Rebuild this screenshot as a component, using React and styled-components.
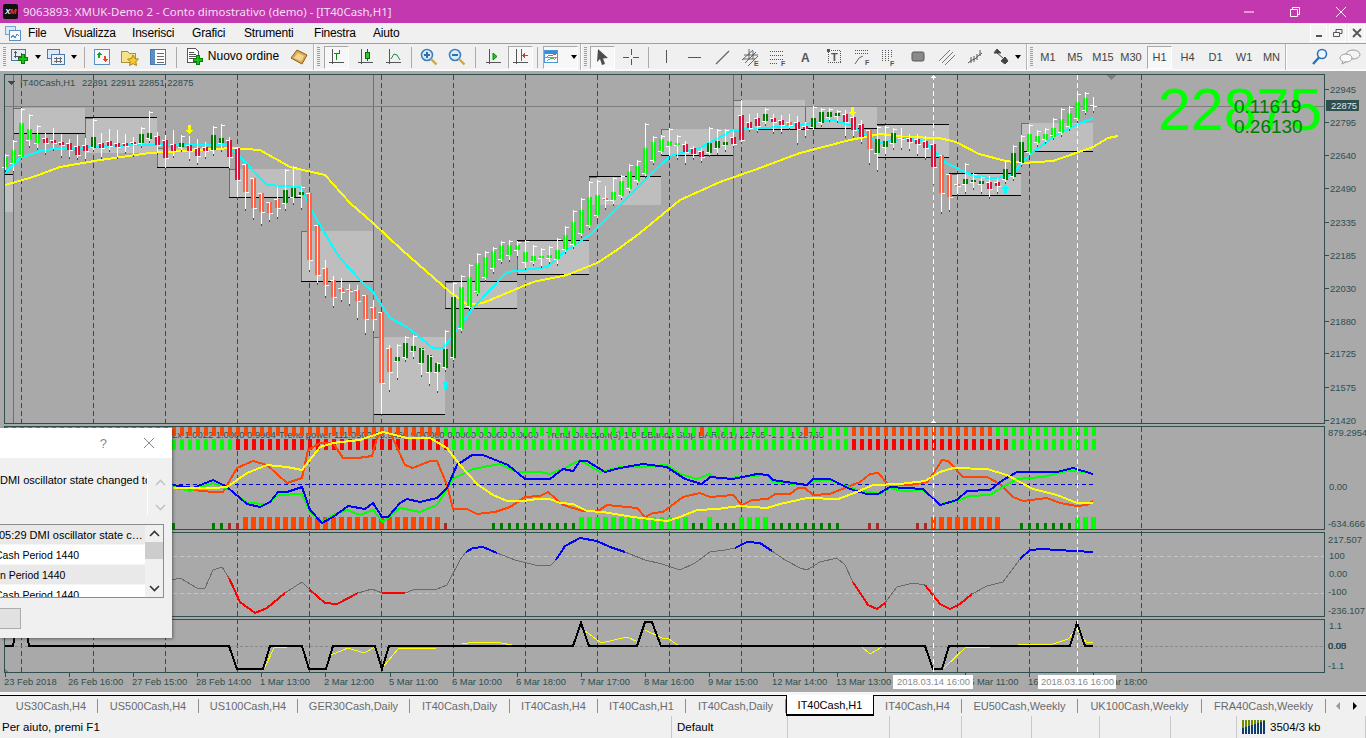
import React from "react";
import styled, { createGlobalStyle } from "styled-components";

const GlobalStyle = createGlobalStyle`
  html, body { margin: 0; padding: 0; background: #f0f0f0; overflow: hidden; }
  * { box-sizing: border-box; }
`;

const UI_FONT = `"Liberation Sans", Arial, sans-serif`;
const SLATE = "#2f4f4f";

/* ---------- chart data, in screen pixels ---------- */

const barX = (k) => 5.33 + 8 * k;

// type, body top, body bottom, optional wick high / low
const CANDLES = [
  ["G",157,167],["G",150,163],["G",123,157,108,158],["G",129,140,114,146],["G",134,143],["r",138,143],["r",140,143],["r",142,145],
  ["r",143,150],["r",146,155],["r",145,151],["D",137,148,119,150],["r",143,148],["r",141,146,129,150],["r",143,147],["r",143,146],
  ["r",142,144],["D",134,143,127,146],["D",133,139,111,141],["r",136,145],["r",140,158,135,168],["r",144,151,130,156],["D",143,147,135,150],["r",145,151,136,159],
  ["r",148,156,139,163],["r",147,151,142,157],["D",135,150,126,154],["D",138,143,124,150],["r",140,157,137,168],["r",148,180,148,197],["R",164,192,164,209],["R",178,208,178,218],
  ["R",193,212,193,224],["R",202,213,202,220],["R",199,208,186,217],["D",190,203,169,209],["D",188,197,166,203],["D",192,195,186,208],["R",193,260,193,270],["R",225,275,225,283],
  ["R",268,285,260,296],["R",280,297,276,306],["R",288,292,278,300],["R",289,291,284,304],["R",290,301,285,318],["R",295,319,295,333],["R",307,319,300,331],["R",312,383,312,414],
  ["R",348,372,345,390],["D",357,361,344,378],["D",343,358,336,360],["D",346,351,335,357],["D",348,363,348,375],["D",355,372,355,384],["D",363,372,362,391],["D",349,368,330,370],
  ["D",297,358,282,360],["G",287,329,275,331],["G",277,307,264,309],["G",263,293,253,294],["G",257,278,251,280],["G",251,268,247,272],["G",245,260,241,262],["G",245,255,240,260],
  ["G",245,250,241,256],["G",252,262,240,268],["G",256,261,245,264],["G",256,258,248,266],["G",255,258,246,262],["G",250,259,238,264],["G",235,250,226,252],["G",222,245,210,247],
  ["G",210,233,198,236],["G",197,225,181,228],["G",195,215,180,218],["o",198,200,186,208],["G",192,200,177,204],["G",181,196,175,198],["G",171,189,164,191],["G",166,181,160,183],
  ["G",148,174,123,176],["G",142,161,136,163],["G",139,152,135,154],["G",141,146,128,156],["G",143,145,135,158],["r",144,152,141,163],["r",148,154,146,158],["r",151,157,148,161],
  ["D",143,153,127,155],["D",141,148,129,153],["D",142,145,129,150],["r",137,144,130,146],["r",115,140,100,142],["r",122,128,114,130],["r",118,126,113,131],["D",114,121,108,124],
  ["r",118,122,114,132],["r",120,125,115,132],["o",122,125,114,128],["r",122,129,116,143],["r",126,129,122,136],["D",118,128,106,130],["D",112,123,108,125],["D",112,117,108,120],
  ["D",113,116,110,121],["r",114,122,110,136],["r",117,130,110,136],["r",124,137,120,142],["R",130,149,130,163],["D",139,153,126,170],["D",141,147,126,154],["D",133,143,128,148],
  ["o",138,139,128,148],["r",138,142,134,149],["r",139,144,134,154],["r",141,148,136,158],["r",144,167,144,183],["R",155,193,155,212],["R",174,197,174,210],["o",184,186,175,194],
  ["D",179,184,163,192],["D",180,182,173,188],["D",181,184,176,192],["r",182,189,176,197],["r",182,186,178,192],["D",169,180,160,182],["D",153,177,145,179],["D",142,163,135,165],
  ["G",134,153,124,155],["G",136,143,130,145],["G",134,140,128,142],["G",128,137,118,138],["G",119,133,108,135],["G",113,127,106,129],["G",102,119,93,121],["G",98,112,92,113],
  ["W",105,106,97,111],
];

const BODY = { G: "#00ff00", D: "#007b00", r: "#dc143c", R: "#ff6347", o: "#ff6347", W: "#ffffff" };

const BOXES = [
  { x: 5, w: 8, top: 175, bot: 212, blackTop: true },
  { x: 13, w: 72, top: 108, bot: 133, blackBot: true, frame: true },
  { x: 85, w: 72, top: 118, bot: 153, blackTop: true, frame: true },
  { x: 157, w: 72, top: 148, bot: 167, blackBot: true, frame: true },
  { x: 229, w: 72, top: 169, bot: 197, blackBot: true, frame: true },
  { x: 301, w: 72, top: 231, bot: 281, blackBot: true, frame: true },
  { x: 373, w: 72, top: 337, bot: 414, blackBot: true, frame: true },
  { x: 445, w: 72, top: 282, bot: 308, blackTop: true, blackBot: true, frame: true },
  { x: 517, w: 72, top: 241, bot: 274, blackTop: true, blackBot: true, frame: true },
  { x: 589, w: 72, top: 177, bot: 205, blackTop: true, frame: true },
  { x: 661, w: 72, top: 129, bot: 155, blackBot: true, frame: true },
  { x: 733, w: 72, top: 100, bot: 129, blackBot: true, frame: true },
  { x: 805, w: 72, top: 106, bot: 128, blackBot: true, frame: true },
  { x: 877, w: 72, top: 125, bot: 157, blackTop: true, blackBot: true, frame: true },
  { x: 949, w: 72, top: 174, bot: 195, blackTop: true, blackBot: true, frame: true },
  { x: 1021, w: 72, top: 123, bot: 151, blackBot: true, frame: true },
];

const YELLOW_MA = [[5,185],[33,177],[60,167],[100,160],[150,153],[233,148],[260,150],[290,167],[325,175],[350,203],[373,223],[402,250],[450,292],[468,305],[483,303],[533,282],[567,275],[597,263],[617,250],[640,233],[680,200],[720,182],[760,168],[800,153],[850,140],[880,134],[906,137],[939,138],[956,142],[979,154],[1006,161],[1023,163],[1053,161],[1076,153],[1093,147],[1108,138],[1118,136]];
const CYAN_MA = [[5,173],[20,158],[43,150],[73,148],[133,145],[167,145],[227,145],[240,157],[267,185],[300,187],[317,220],[333,247],[340,258],[360,280],[373,292],[390,318],[407,327],[433,348],[443,348],[457,330],[473,308],[507,272],[547,267],[567,250],[590,235],[620,205],[650,175],[670,156],[700,148],[733,130],[765,128],[800,125],[832,120],[850,125],[880,143],[906,138],[925,142],[946,163],[976,177],[996,178],[1013,175],[1021,163],[1033,152],[1053,137],[1076,125],[1093,118]];

const OSC_ORANGE = [[173,488],[213,492],[223,492],[237,468],[253,461],[267,465],[287,483],[302,478],[308,450],[320,443],[333,443],[343,458],[358,458],[372,456],[378,435],[390,432],[405,465],[413,468],[430,461],[437,461],[447,485],[453,509],[467,509],[477,514],[495,512],[510,507],[525,497],[540,496],[548,492],[563,505],[583,511],[598,511],[607,505],[637,508],[645,517],[653,513],[663,512],[683,497],[700,493],[710,497],[733,495],[742,505],[752,500],[768,499],[775,494],[790,494],[798,488],[805,488],[813,495],[830,494],[847,487],[860,482],[870,474],[878,473],[888,484],[910,485],[927,482],[933,474],[942,460],[948,461],[963,477],[987,477],[1000,484],[1013,497],[1023,501],[1047,498],[1060,503],[1077,506],[1087,505],[1093,501]];
const OSC_YELLOW = [[173,488],[213,488],[227,487],[247,473],[267,465],[287,467],[302,470],[320,447],[333,443],[360,440],[383,432],[407,438],[430,438],[447,448],[460,465],[477,484],[493,495],[507,501],[523,501],[537,499],[550,499],[560,503],[573,504],[587,511],[603,512],[633,517],[667,521],[680,517],[697,510],[717,509],[740,506],[767,508],[780,504],[807,498],[838,499],[857,492],[873,485],[900,484],[925,481],[940,472],[953,468],[987,469],[1007,475],[1033,489],[1057,495],[1077,503],[1093,503]];
const OSC_GREEN = [[173,487],[190,491],[213,483],[230,490],[247,503],[267,504],[278,495],[302,494],[310,512],[322,522],[333,515],[347,510],[360,515],[373,510],[383,522],[400,508],[420,512],[437,505],[453,479],[473,469],[500,464],[517,472],[540,472],[550,474],[567,467],[580,460],[600,472],[620,467],[640,467],[667,465],[680,474],[697,479],[710,474],[717,479],[740,477],[767,475],[773,482],[807,485],[813,481],[830,480],[843,485],[857,490],[880,494],[890,488],[903,491],[923,490],[940,504],[957,501],[970,496],[990,495],[1003,487],[1017,479],[1043,477],[1067,471],[1090,472]];
const OSC_BLUE = [[173,485],[193,488],[213,480],[227,487],[247,504],[260,507],[270,502],[278,492],[287,492],[302,487],[310,510],[322,523],[333,517],[348,506],[365,509],[373,503],[382,517],[388,517],[400,503],[407,499],[420,502],[437,498],[447,488],[457,465],[472,455],[483,455],[508,465],[525,479],[550,479],[563,469],[573,471],[580,461],[587,461],[605,472],[620,468],[643,464],[667,467],[685,479],[702,484],[710,477],[733,479],[757,474],[768,475],[773,480],[793,483],[807,485],[813,479],[830,479],[850,489],[867,494],[878,494],[890,487],[923,489],[940,505],[957,500],[967,491],[990,490],[1003,480],[1017,472],[1057,472],[1073,468],[1093,474]];

const CCI_SEGMENTS = [
  { color: "#696969", w: 1, pts: [[172,580],[180,578],[197,588],[205,588],[213,570],[222,567],[229,578]] },
  { color: "#ff0000", w: 2, pts: [[229,578],[240,602],[255,613],[267,608],[285,593]] },
  { color: "#696969", w: 1, pts: [[285,593],[302,582],[310,590]] },
  { color: "#ff0000", w: 2, pts: [[310,590],[325,603],[337,604],[358,593]] },
  { color: "#696969", w: 1, pts: [[358,593],[372,589],[382,593]] },
  { color: "#ff0000", w: 2, pts: [[382,593],[405,593]] },
  { color: "#696969", w: 1, pts: [[405,593],[413,590],[437,589],[447,585],[460,560],[466,552]] },
  { color: "#0000ff", w: 2, pts: [[466,552],[473,548],[483,547],[497,553]] },
  { color: "#696969", w: 1, pts: [[497,553],[515,560],[535,565],[550,566],[556,560]] },
  { color: "#0000ff", w: 2, pts: [[556,560],[565,546],[580,538],[597,541],[610,547],[625,552]] },
  { color: "#696969", w: 1, pts: [[625,552],[645,560],[662,564],[680,570],[695,563],[710,552],[725,550],[735,548]] },
  { color: "#0000ff", w: 2, pts: [[735,548],[747,542],[760,543],[772,551]] },
  { color: "#696969", w: 1, pts: [[772,551],[785,560],[800,568],[807,570],[820,562],[837,558],[845,565],[853,582]] },
  { color: "#ff0000", w: 2, pts: [[853,582],[868,605],[877,609],[885,603]] },
  { color: "#696969", w: 1, pts: [[885,603],[897,587],[913,583],[925,585]] },
  { color: "#ff0000", w: 2, pts: [[925,585],[940,604],[950,609],[960,604],[972,594]] },
  { color: "#696969", w: 1, pts: [[972,594],[987,586],[1003,582],[1020,559]] },
  { color: "#0000ff", w: 2, pts: [[1020,559],[1030,550],[1042,549],[1057,550],[1093,552]] },
];

const STEP_BLACK = [[5,646],[13,646],[17,622],[25,622],[29,646],[229,646],[237,669],[263,669],[270,646],[302,646],[309,669],[326,669],[333,646],[375,646],[382,669],[389,646],[573,646],[581,623],[589,646],[637,646],[645,622],[652,622],[661,646],[925,646],[933,669],[942,669],[949,646],[1070,646],[1077,623],[1085,646],[1093,646]];
const STEP_YELLOW = [
  [[265,667],[274,648],[287,647]],
  [[331,655],[348,648],[364,653],[375,647]],
  [[383,667],[398,649],[418,648],[436,648]],
  [[462,644],[475,642],[501,643],[512,645]],
  [[584,630],[601,643],[627,637],[638,642]],
  [[645,630],[662,638],[669,639],[679,646]],
  [[862,647],[870,654],[882,647]],
  [[944,668],[966,647],[990,647]],
  [[1018,644],[1053,644],[1068,639],[1077,629],[1086,642],[1093,643]],
];

const topRowColor = (x) => {
  if (x < 441) return "#ff4500";
  if (Math.abs(x - 701) < 3 || Math.abs(x - 805) < 3) return "#ff4500";
  if (x > 850 && x < 992) return "#ff4500";
  return "#00ff00";
};

const midRowColor = (x) => {
  if (x < 230) return "#00ff00";
  if (x < 448) return "#ff0000";
  if (x > 850 && x < 1008) return "#ff0000";
  return "#00ff00";
};

// bottom histogram: [from x, to x, colour, tall]
const HISTO = [
  [172,175,"#007b00",false],[212,222,"#007b00",false],[228,238,"#a52a2a",false],[244,442,"#ff4500",true],[444,446,"#a52a2a",false],
  [492,574,"#007b00",false],[580,686,"#00ff00",true],[692,702,"#007b00",false],[708,710,"#00ff00",true],[716,734,"#007b00",false],
  [740,766,"#00ff00",true],[772,838,"#007b00",false],[868,878,"#a52a2a",false],[916,926,"#a52a2a",false],[932,998,"#ff4500",true],
  [1020,1070,"#007b00",false],[1076,1094,"#00ff00",true],
];

const PRICE_LABELS = [[22945,93],[22795,126],[22640,159],[22490,192],[22335,226],[22185,259],[22030,292],[21880,325],[21725,357],[21575,391],[21420,424]];
const DATE_LABELS = [["23 Feb 2018",4],["26 Feb 16:00",68],["27 Feb 15:00",132],["28 Feb 14:00",196],["1 Mar 13:00",260],["2 Mar 12:00",324],["5 Mar 11:00",389],["6 Mar 10:00",452],["6 Mar 18:00",516],["7 Mar 17:00",580],["8 Mar 16:00",644],["9 Mar 15:00",708],["12 Mar 14:00",772],["13 Mar 13:00",836],["15 Mar 11:00",964],["16 Mar 10:00",1028],["19 Mar 18:00",1092]];
const PANE_LABELS = [["879.2954",1328,436],["0.00",1329,490],["-634.666",1328,527],["217.507",1328,543],["100",1329,559],["0.00",1329,577],["-100",1328,595],["-236.107",1328,614],["1.1",1329,629],["0.00",1328,649],["0.03",1328,649],["0.05",1328,649],["-1.1",1328,669]];
const VERT_DASHES = [21,93,165,237,309,381,453,525,597,669,741,813,885,957,1029,1141];
const HEADS = [[933,1],[1077,1]];

const linePts = (pts) => pts.map((p) => p.join(",")).join(" ");

/* ---------- shell ---------- */

const Page = styled.div`
  width: 1366px;
  height: 738px;
  display: flex;
  flex-direction: column;
  background: #f0f0f0;
  overflow: hidden;
  font-family: ${UI_FONT};
`;

const TitleBar = styled.header`
  height: 23px;
  flex: none;
  background: #c338ae;
  display: flex;
  align-items: center;
  padding: 0 2px 0 3px;
  color: #f7dff3;
  font-family: "Noto Sans", sans-serif;
  font-size: 11.45px;
`;

const Logo = styled.span`
  width: 15px;
  height: 15px;
  flex: none;
  margin-right: 5px;
  background: #111;
  border-radius: 2px;
  color: #fff;
  font: italic bold 8px ${UI_FONT};
  display: flex;
  align-items: center;
  justify-content: center;
  letter-spacing: -0.5px;
  b { color: #f33; font-weight: bold; }
`;

const TitleText = styled.span`
  flex: 1;
  white-space: nowrap;
`;

const WinButton = styled.span`
  width: 46px;
  height: 23px;
  display: flex;
  align-items: center;
  justify-content: center;
`;

const MenuBar = styled.nav`
  height: 21px;
  flex: none;
  display: flex;
  align-items: center;
  padding-left: 4px;
  border-bottom: 1px solid #a0a0a0;
  background: #f0f0f0;
`;

const MenuIconSlot = styled.span`
  width: 24px;
  display: flex;
  justify-content: flex-start;
  padding-left: 1px;
`;

const MenuItem = styled.span`
  width: ${(p) => p.$w}px;
  font-size: 12px;
  letter-spacing: -0.2px;
  color: #000;
  white-space: nowrap;
`;

const MdiButtons = styled.div`
  margin-left: auto;
  display: flex;
  gap: 2px;
  padding-right: 1px;
  height: 18px;
`;

const MdiButton = styled.span`
  width: 17px;
  height: 18px;
  background: #f4f4f4;
  border: 1px solid #fff;
  display: flex;
  align-items: center;
  justify-content: center;
`;

const ToolBar = styled.div`
  height: 27px;
  flex: none;
  display: flex;
  align-items: center;
  padding-top: 1px;
  background: #f0f0f0;
  border-bottom: 2px solid #fafafa;
`;

const Slot = styled.div`
  width: ${(p) => p.$w}px;
  height: 24px;
  flex: none;
  display: flex;
  align-items: center;
  justify-content: center;
  position: relative;
  font-size: 11px;
  color: #444;
`;

const PressedBox = styled.div`
  height: 23px;
  width: ${(p) => p.$w}px;
  display: flex;
  align-items: center;
  justify-content: center;
  gap: 6px;
  border: 1px solid #fff;
  border-top-color: #a9a9a9;
  border-left-color: #a9a9a9;
  background-color: #f7f7f7;
  background-image: radial-gradient(#e4e4e4 0.6px, transparent 0.7px);
  background-size: 2px 2px;
`;

const Grip = styled.div`
  width: 3px;
  height: 20px;
  background: repeating-linear-gradient(#9e9e9e 0 1px, transparent 1px 2px);
`;

const Separator = styled.div`
  width: 1px;
  height: 21px;
  background: #ababab;
`;

const GroupEdge = styled.div`
  width: 2px;
  height: 26px;
  flex: none;
  background: #fff;
  border-left: 1px solid #b5b5b5;
`;

const Caret = styled.span`
  width: 0;
  height: 0;
  margin-left: 6px;
  border: 3px solid transparent;
  border-top: 4px solid #000;
  border-bottom: none;
`;

const OrderLabel = styled.span`
  margin-left: 4px;
  color: #000;
  font-size: 12px;
  margin-bottom: 2px;
`;

const Spacer = styled.div`
  flex: 1;
`;

const ChartArea = styled.main`
  height: 625px;
  flex: none;
  position: relative;
  background: #f6f6f6;
  overflow: hidden;
  border-bottom: 1px solid #000;
`;

const ChartSvg = styled.svg`
  display: block;
  width: 1366px;
  height: 621px;
  background: #a9a9a9;
`;

const SvgLabel = styled.text`
  font-family: ${UI_FONT};
  font-size: 9.4px;
  fill: ${(p) => p.$fill || SLATE};
`;

const BigPrice = styled.text`
  font-family: ${UI_FONT};
  font-size: 59px;
  fill: #00ff00;
`;

const SmallValue = styled.text`
  font-family: ${UI_FONT};
  font-size: 19px;
  fill: #007b00;
`;

/* ---------- alert dialog, lies over the chart ---------- */

const Dialog = styled.aside`
  position: absolute;
  left: 0;
  top: 357px;
  width: 172px;
  height: 210px;
  background: #f0f0f0;
  box-shadow: 1px 1px 3px rgba(40, 40, 40, 0.55);
  color: #000;
  display: flex;
  flex-direction: column;
`;

const DialogHead = styled.div`
  height: 30px;
  background: #fff;
  display: flex;
  align-items: center;
  justify-content: flex-end;
  gap: 36px;
  padding-right: 17px;
  color: #8a8a8a;
  font-size: 13px;
`;

const MessageRow = styled.div`
  height: 66px;
  display: flex;
  padding-top: 15px;
`;

const MessageText = styled.div`
  width: 148px;
  height: 42px;
  padding-top: 1px;
  overflow: hidden;
  white-space: nowrap;
  border-right: 1px solid #fff;
  font-size: 11px;
`;

const MessageArrows = styled.div`
  flex: 1;
  height: 42px;
  display: flex;
  flex-direction: column;
  align-items: center;
  justify-content: space-between;
  padding: 6px 0 4px;
`;

const AlertList = styled.div`
  width: 164px;
  height: 74px;
  background: #fff;
  border: 1px solid #8c8c8c;
  border-left: none;
  display: flex;
  overflow: hidden;
`;

const AlertRows = styled.div`
  width: 145px;
  overflow: hidden;
`;

const AlertRow = styled.div`
  height: 20px;
  line-height: 20px;
  white-space: nowrap;
  background: ${(p) => (p.$shaded ? "#e9e9e9" : "#fff")};
  font-size: ${(p) => p.$size || 10.5}px;
  text-indent: ${(p) => p.$indent || 0}px;
  border-bottom: 1px solid #f5f5f5;
`;

const AlertScroll = styled.div`
  flex: 1;
  background: #f0f0f0;
  display: flex;
  flex-direction: column;
  align-items: center;
`;

const ScrollArrow = styled.span`
  height: 17px;
  display: flex;
  align-items: center;
  justify-content: center;
`;

const ScrollThumb = styled.span`
  width: 100%;
  height: 17px;
  background: #cdcdcd;
`;

const DialogButton = styled.div`
  width: 21px;
  height: 21px;
  margin-top: 10px;
  background: #e1e1e1;
  border: 1px solid #adadad;
  border-left: none;
`;

/* ---------- tabs and status bar ---------- */

const TabBar = styled.div`
  height: 20px;
  flex: none;
  display: flex;
  align-items: stretch;
  padding-left: 5px;
  background: #f0f0f0;
  position: relative;
`;

const Tab = styled.div`
  width: ${(p) => p.$w}px;
  flex: none;
  display: flex;
  align-items: center;
  justify-content: center;
  font-size: 11px;
  white-space: nowrap;
  color: ${(p) => (p.$active ? "#000" : "#6a6a6a")};
  background: ${(p) => (p.$active ? "#fff" : "transparent")};
  border-right: 1px solid ${(p) => (p.$active ? "#000" : "#8f8f8f")};
  border-left: ${(p) => (p.$active ? "1px solid #000" : "none")};
  border-bottom: ${(p) => (p.$active ? "2px solid #000" : "none")};
  margin: ${(p) => (p.$active ? "-1px 0 0 0" : "3px 0 3px 0")};
`;

const TabArrows = styled.div`
  flex: 1;
  display: flex;
  align-items: center;
  justify-content: space-around;
  padding: 0 3px;
`;

const StatusBar = styled.footer`
  flex: 1;
  display: flex;
  align-items: center;
  font-size: 11.5px;
  color: #000;
  background: #f0f0f0;
`;

const StatusCell = styled.div`
  width: ${(p) => p.$w}px;
  height: 100%;
  flex: none;
  display: flex;
  align-items: center;
  gap: 4px;
  padding-left: ${(p) => p.$pad ?? 5}px;
  border-right: 1px solid #c8c8c8;
  white-space: nowrap;
`;

/* ---------- icons ---------- */

const Ico = ({ w = 18, h = 18, children }) => (
  <svg width={w} height={h} viewBox={`0 0 ${w} ${h}`} shapeRendering="crispEdges">
    {children}
  </svg>
);

const GreenPlus = ({ x = 9, y = 9 }) => (
  <path
    d={`M${x + 3} ${y}h3v3h3v3h-3v3h-3v-3h-3v-3h3z`}
    fill="#16c616"
    stroke="#0b7a0b"
    strokeWidth="1"
  />
);

const NewChartIcon = () => (
  <Ico>
    <rect x="0.5" y="1.5" width="14" height="11" fill="#e4edf7" stroke="#4a78a8" />
    <path d="M3 4h3M3 8h7M4.5 3v7M10 5v5" stroke="#555" fill="none" />
    <GreenPlus x={7} y={6} />
  </Ico>
);

const ProfilesIcon = () => (
  <Ico>
    <rect x="0.5" y="1.5" width="12" height="9" fill="#dde9f6" stroke="#4a78a8" />
    <rect x="4.5" y="6.5" width="13" height="10" fill="#e9f1fa" stroke="#4a78a8" />
    <path d="M7 10h8M7 13h8M9 9v6M13 9v6" stroke="#6a6a6a" />
  </Ico>
);

const MarketWatchIcon = () => (
  <Ico>
    <rect x="1.5" y="1.5" width="15" height="15" fill="#f3f7fb" stroke="#5b8fc4" />
    <path d="M6 4l3 3H7v3H5V7H3z" fill="#18a418" />
    <path d="M12 14l3-3h-2V8h-2v3H9z" fill="#e04a1f" />
  </Ico>
);

const FolderStarIcon = () => (
  <Ico w={20}>
    <path d="M1.5 3.5h6l2 2h6v9h-14z" fill="#f7e28b" stroke="#a88f3d" />
    <path d="M13 7l1.8 3.6 3.7.5-2.7 2.6.7 3.8-3.5-1.9-3.4 1.9.6-3.8-2.6-2.6 3.7-.5z" fill="#f5c92c" stroke="#a8841a" shapeRendering="auto" />
  </Ico>
);

const NavigatorIcon = () => (
  <Ico>
    <rect x="1.5" y="1.5" width="15" height="15" fill="#fff" stroke="#4a78a8" />
    <rect x="2" y="2" width="4" height="14" fill="#5b8fc4" />
    <path d="M8 5h7M8 8h7M8 11h7M8 14h7" stroke="#6a6a6a" />
  </Ico>
);

const OrderIcon = () => (
  <Ico>
    <path d="M1.5 0.5h8l3 3v11h-11z" fill="#fff" stroke="#555" />
    <path d="M3 4h5M3 6h7M3 8h7M3 10h4" stroke="#555" />
    <GreenPlus x={7} y={7} />
  </Ico>
);

const AutoTradeIcon = () => (
  <Ico>
    <path d="M1 10l6-8 10 5-5 9z" fill="#d9ad55" stroke="#8a5d1c" shapeRendering="auto" />
    <path d="M4 10l4-5 6 3-3 5z" fill="#f2d68e" shapeRendering="auto" />
  </Ico>
);

const Axes = ({ color = "#555" }) => (
  <path d={`M4 1v15M1 14h15M2 16h0`} stroke={color} fill="none" />
);

const BarsIcon = () => (
  <Ico>
    <Axes />
    <path d="M8 12V5h3V2" stroke="#0a8a0a" fill="none" />
    <path d="M8 5h-2" stroke="#0a8a0a" />
  </Ico>
);

const CandlesIcon = () => (
  <Ico>
    <Axes />
    <path d="M10.5 1v12" stroke="#0a6a0a" />
    <rect x="8.5" y="4.5" width="4" height="6" fill="#22d022" stroke="#0a6a0a" />
  </Ico>
);

const LineIcon = () => (
  <Ico>
    <Axes />
    <path d="M6 11l3-5 3 1 3 5" stroke="#1a8a4a" fill="none" shapeRendering="auto" />
  </Ico>
);

const ZoomIcon = ({ plus }) => (
  <Ico>
    <circle cx="7" cy="7" r="5.5" fill="#d8ecfb" stroke="#3f7fbf" strokeWidth="1.6" shapeRendering="auto" />
    <path d="M11 11l5.5 5.5" stroke="#d5a92f" strokeWidth="2.4" shapeRendering="auto" />
    <path d={plus ? "M4 7h6M7 4v6" : "M4 7h6"} stroke="#2f6fae" strokeWidth="1.4" />
  </Ico>
);

const ShiftIcon = () => (
  <Ico>
    <Axes />
    <path d="M8 5l4 3.5-4 3.5z" fill="#22c022" stroke="#0a8a0a" shapeRendering="auto" />
  </Ico>
);

const AutoScrollIcon = () => (
  <Ico>
    <Axes />
    <path d="M9.5 1v12" stroke="#1d6fb8" strokeWidth="1.4" />
    <path d="M16 7h-3V5l-3 2.5L13 10V8h3z" fill="#c8441c" />
  </Ico>
);

const TemplateIcon = () => (
  <Ico>
    <rect x="0.5" y="1.5" width="16" height="14" fill="#fff" stroke="#2e7fd2" />
    <rect x="1" y="2" width="15" height="3" fill="#2e8fe8" />
    <path d="M1 9h15" stroke="#2e8fe8" />
    <path d="M3 8l3-1 3 0 3-1 2 0" stroke="#d63a1a" fill="none" />
    <path d="M3 13l3-1 3-1 3 1 2-1" stroke="#1eaa3a" fill="none" />
  </Ico>
);

const CursorIcon = () => (
  <Ico>
    <path d="M4 1l10 9-5 0.5L11 16l-3 1-2-6-3 3z" fill="#4d4d4d" shapeRendering="auto" />
  </Ico>
);

const CrossIcon = () => (
  <Ico>
    <path d="M9 1v6M9 11v6M1 9h6M11 9h6" stroke="#555" />
  </Ico>
);

const VLineIcon = () => <Ico><path d="M9 2v13" stroke="#555" /></Ico>;
const HLineIcon = () => <Ico><path d="M2 9h13" stroke="#555" /></Ico>;
const TrendIcon = () => (
  <Ico><path d="M2 16L15 3" stroke="#666" strokeWidth="1.2" shapeRendering="auto" /></Ico>
);

const ToolLetter = styled.text`
  font-family: ${UI_FONT};
  font-weight: bold;
  font-size: ${(p) => p.$size || 7}px;
  fill: #555;
`;

const ChannelEIcon = () => (
  <Ico w={20}>
    <path d="M1 12L12 2M4 15L15 4M7 18L17 8M3 7h14M2 11h12M8 1v10M12 3v8" stroke="#555" strokeWidth="0.9" shapeRendering="auto" />
    <ToolLetter x="13" y="18">E</ToolLetter>
  </Ico>
);

const FiboFIcon = () => (
  <Ico w={20}>
    <path d="M2 3h13M2 7h13M2 11h13M2 15h8" stroke="#555" strokeDasharray="1 1" />
    <ToolLetter x="13" y="18">F</ToolLetter>
  </Ico>
);

const LetterAIcon = () => (
  <Ico><ToolLetter $size={12} x="3" y="14">A</ToolLetter></Ico>
);

const LetterTIcon = () => (
  <Ico>
    <rect x="2.5" y="2.5" width="12" height="12" fill="none" stroke="#555" strokeDasharray="1 1" />
    <rect x="1" y="1" width="3" height="3" fill="#555" />
    <ToolLetter $size={11} x="5" y="13">T</ToolLetter>
  </Ico>
);

const FiboArcIcon = () => (
  <Ico w={20}>
    <path d="M2 2h14M2 5h14" stroke="#555" strokeDasharray="1 1" />
    <path d="M2 16l4-6 4-2" stroke="#666" fill="none" shapeRendering="auto" />
    <ToolLetter x="12" y="17">F</ToolLetter>
  </Ico>
);

const FiboFanIcon = () => (
  <Ico w={20}>
    <path d="M2 2v12M5 2v12M8 2v12M11 2v7" stroke="#555" strokeDasharray="1 1" />
    <ToolLetter x="10" y="18">F</ToolLetter>
  </Ico>
);

const RectIcon = () => (
  <Ico w={14}>
    <rect x="1" y="4" width="12" height="9" rx="1.5" fill="#8a8a8a" stroke="#555" shapeRendering="auto" />
  </Ico>
);

const EquiLinesIcon = () => (
  <Ico>
    <path d="M1 13L12 2M4 15L15 4M7 17L17 7" stroke="#777" shapeRendering="auto" />
  </Ico>
);

const HatchIcon = () => (
  <Ico w={16}>
    <path d="M1 15l4-3 3-1 3-3 4-3M4 9v6M7 8v6M10 6v6M13 2v6" stroke="#555" fill="none" shapeRendering="auto" />
  </Ico>
);

const ArrowsIcon = () => (
  <Ico w={16}>
    <path d="M4 1l4 4H1zM4 5l6 5M8 13l4-4 3 4-3 3z" fill="#444" stroke="#444" shapeRendering="auto" />
  </Ico>
);

const SearchIcon = () => (
  <Ico>
    <circle cx="11" cy="6" r="4.5" fill="#eef6fd" stroke="#2a6fc0" strokeWidth="1.6" shapeRendering="auto" />
    <path d="M8 9.5L2 16" stroke="#2a6fc0" strokeWidth="2.4" shapeRendering="auto" />
  </Ico>
);

const ChatIcon = () => (
  <Ico w={22}>
    <ellipse cx="14" cy="6.5" rx="7" ry="4.5" fill="#f4f4f4" stroke="#9a9a9a" shapeRendering="auto" />
    <ellipse cx="7" cy="10" rx="6" ry="4" fill="#fafafa" stroke="#9a9a9a" shapeRendering="auto" />
    <path d="M4 13l-1 3 4-2" fill="#fafafa" stroke="#9a9a9a" shapeRendering="auto" />
  </Ico>
);

const MenuChartIcon = () => (
  <Ico w={16} h={15}>
    <rect x="0.5" y="0.5" width="10" height="8" fill="#dbe8f6" stroke="#7aa3cf" />
    <rect x="4.5" y="4.5" width="11" height="10" fill="#f6fafe" stroke="#5b8fc4" />
    <path d="M6 12l2-3 2 3 2-4 2 2" stroke="#5b8fc4" fill="none" />
  </Ico>
);

const ConnectionIcon = () => (
  <svg width="24" height="14" viewBox="0 0 24 14" shapeRendering="crispEdges">
    {[0, 1, 2, 3, 4, 5, 6, 7].map((i) => (
      <g key={i}>
        <rect x={i * 3} y={0} width="2" height={Math.max(0, 8 - i)} fill="#6f8b00" />
        <rect x={i * 3} y={8 - i} width="2" height={6 + i} fill="#0d3c6e" />
      </g>
    ))}
  </svg>
);

const Chevron = ({ up, color = "#555" }) => (
  <svg width="11" height="7" viewBox="0 0 11 7">
    <path d={up ? "M1 6l4.5-4.5L10 6" : "M1 1l4.5 4.5L10 1"} fill="none" stroke={color} strokeWidth="1.6" />
  </svg>
);

/* ---------- toolbar content ---------- */

const TOOLS = [
  { grip: 8 },
  { w: 36, icon: NewChartIcon, caret: true },
  { w: 36, icon: ProfilesIcon, caret: true },
  { sep: 8 },
  { w: 28, icon: MarketWatchIcon },
  { w: 28, icon: FolderStarIcon },
  { w: 28, icon: NavigatorIcon },
  { sep: 8 },
  { w: 105, icon: OrderIcon, label: "Nuovo ordine" },
  { w: 28, icon: AutoTradeIcon },
  { edge: true },
  { grip: 7 },
  { w: 29, icon: BarsIcon, pressed: 25 },
  { w: 29, icon: CandlesIcon },
  { w: 28, icon: LineIcon },
  { sep: 6 },
  { w: 29, icon: () => <ZoomIcon plus /> },
  { w: 27, icon: () => <ZoomIcon /> },
  { sep: 10 },
  { w: 27, icon: ShiftIcon },
  { w: 27, icon: AutoScrollIcon, pressed: 25 },
  { sep: 7 },
  { w: 39, icon: TemplateIcon, caret: true, pressed: 35 },
  { edge: true },
  { grip: 7 },
  { w: 27, icon: CursorIcon, pressed: 25 },
  { w: 29, icon: CrossIcon },
  { sep: 6 },
  { w: 30, icon: VLineIcon },
  { w: 28, icon: HLineIcon },
  { w: 28, icon: TrendIcon },
  { w: 27, icon: ChannelEIcon },
  { w: 28, icon: FiboFIcon },
  { w: 29, icon: LetterAIcon },
  { w: 28, icon: LetterTIcon },
  { w: 27, icon: FiboArcIcon },
  { w: 28, icon: FiboFanIcon },
  { w: 28, icon: RectIcon },
  { w: 29, icon: EquiLinesIcon },
  { w: 27, icon: HatchIcon },
  { w: 38, icon: ArrowsIcon, caret: true },
  { edge: true },
  { grip: 7 },
  { w: 26, text: "M1" },
  { w: 28, text: "M5" },
  { w: 28, text: "M15" },
  { w: 28, text: "M30" },
  { w: 29, text: "H1", pressed: 25 },
  { w: 27, text: "H4" },
  { w: 29, text: "D1" },
  { w: 28, text: "W1" },
  { w: 27, text: "MN" },
  { edge: true },
];

const MENUS = [["File", 36],["Visualizza", 68],["Inserisci", 60],["Grafici", 52],["Strumenti", 70],["Finestra", 59],["Aiuto", 40]];

const TABS = [
  ["US30Cash,H4", 93],["US500Cash,H4", 101],["US100Cash,H4", 99],["GER30Cash,Daily", 112],["IT40Cash,Daily", 100],["IT40Cash,H4", 88],["IT40Cash,H1", 88],
  ["IT40Cash,Daily", 100],["IT40Cash,H1", 88, true],["IT40Cash,H4", 88],["EU50Cash,Weekly", 116],["UK100Cash,Weekly", 124],["FRA40Cash,Weekly", 124],
];

const renderTool = (t, i) => {
  if (t.grip) return <Slot key={i} $w={t.grip}><Grip /></Slot>;
  if (t.sep) return <Slot key={i} $w={t.sep}><Separator /></Slot>;
  if (t.edge) return <GroupEdge key={i} />;
  const Icon = t.icon;
  const inner = (
    <>
      {Icon && <Icon />}
      {t.text}
      {t.label && <OrderLabel>{t.label}</OrderLabel>}
      {t.caret && <Caret />}
    </>
  );
  return (
    <Slot key={i} $w={t.w}>
      {t.pressed ? <PressedBox $w={t.pressed}>{inner}</PressedBox> : inner}
    </Slot>
  );
};

/* ---------- chart drawing ---------- */

const Candle = ({ c, k }) => {
  const [type, top, bot, hi, lo] = c;
  const x = Math.round(barX(k));
  const high = hi ?? top - (3 + ((k * 7) % 11));
  const low = lo ?? bot + (3 + ((k * 5) % 9));
  const up = type === "G" || type === "D";
  const wick = type === "D" && k === 93 ? "#000" : "#fff";
  return (
    <g>
      {type !== "W" && <rect x={x - 2} y={top} width="5" height={Math.max(1, bot - top)} fill={BODY[type]} />}
      <rect x={x} y={high} width="1" height={low - high} fill={wick} />
      <rect x={x - 3} y={up ? Math.min(bot, low - 3) : top} width="3" height="1" fill="#fff" />
      <rect x={x + 1} y={up ? high + 1 : Math.min(bot, low - 2)} width="3" height="1" fill="#fff" />
      <rect x={x} y={low} width="1" height="2" fill="#c8102e" />
    </g>
  );
};

const PriceBox = ({ b }) => (
  <g>
    <rect x={b.x} y={b.top} width={b.w} height={b.bot - b.top} fill="#bebebe" />
    {b.frame && <path d={`M${b.x + 0.5} ${b.bot}V${b.top + 0.5}H${b.x + 8}`} stroke="#6e6e6e" fill="none" />}
    {b.blackTop && <rect x={b.x} y={b.top - 1} width={b.w} height="1" fill="#000" />}
    {b.blackBot && <rect x={b.x} y={b.bot} width={b.w} height="1" fill="#000" />}
  </g>
);

const Line = ({ pts, color, w = 2 }) => (
  <polyline points={linePts(pts)} fill="none" stroke={color} strokeWidth={w} />
);

const Arrow = ({ x, y, down, color }) => (
  <path
    d={down ? `M${x - 1} ${y - 4}h3v5h2l-3.5 4-3.5-4h2z` : `M${x - 1} ${y + 4}h3v-5h2l-3.5-4-3.5 4h2z`}
    fill={color}
  />
);

const Chart = () => {
  const keys = CANDLES.map((_, k) => k);
  return (
    <ChartSvg viewBox="0 71 1366 621" shapeRendering="crispEdges">
      {/* dashed day separators below the boxes */}
      {VERT_DASHES.map((x) => (
        <path key={x} d={`M${x + 0.5} 75V673`} stroke={SLATE} strokeDasharray="5 3" />
      ))}

      {BOXES.map((b) => <PriceBox key={b.x} b={b} />)}

      {[13, 373, 733].map((x) => (
        <path key={x} d={`M${x + 0.5} 75V424`} stroke="#6e6e6e" />
      ))}
      <path d="M5 106.5H1325" stroke="#7d7d7d" />

      <Line pts={YELLOW_MA} color="#ffff00" />
      <Line pts={CYAN_MA} color="#00ffff" />
      {CANDLES.map((c, k) => <Candle key={k} c={c} k={k} />)}

      <Arrow x={189} y={129} down color="#ffff00" />
      <Arrow x={852} y={111} down color="#ffff00" />
      <Arrow x={445} y={385} color="#00ffff" />
      <Arrow x={1005} y={190} color="#00ffff" />

      <BigPrice x="1158" y="130">22875</BigPrice>
      <SmallValue x="1234" y="113">0.11619</SmallValue>
      <SmallValue x="1234" y="133">0.26130</SmallValue>

      <SvgLabel x="20" y="86">IT40Cash,H1</SvgLabel>
      <SvgLabel x="82" y="86">22891 22911 22851 22875</SvgLabel>
      <path d="M8 81h7l-3.5 4z" fill={SLATE} />
      <path d="M1106 75h10l-5 5z" fill="#808080" />

      {/* pane 2: state bars and the four oscillator lines */}
      <SvgLabel x="172" y="438">Lx 1.0022 1.0000 0.9964</SvgLabel>
      <SvgLabel x="279" y="438">Trend power 111.0500 95.9456 90.0000 0.0000 0.0000 0.0000</SvgLabel>
      <SvgLabel x="546" y="438">Trend Direction(5) 1 0</SvgLabel>
      <SvgLabel x="641" y="438">BBands Stop BAR(6,1) 22765 -1 1 -1 22765</SvgLabel>
      {keys.map((k) => {
        const x = Math.round(barX(k));
        return (
          <g key={k}>
            <rect x={x - 1} y={426} width="4" height="10" fill={topRowColor(x)} />
            <rect x={x - 1} y={439} width="4" height="11" fill={midRowColor(x)} />
          </g>
        );
      })}
      <path d="M172 484.5H1093" stroke="#0000cd" strokeDasharray="4 3" />
      {HISTO.flatMap(([from, to, color, tall]) =>
        keys
          .map((k) => Math.round(barX(k)))
          .filter((x) => x >= from && x <= to)
          .map((x) => (
            <rect
              key={`${from}-${x}`}
              x={tall ? x - 2 : x - 1}
              y={tall ? 517 : 523}
              width={tall ? 5 : 3}
              height={tall ? 13 : 7}
              fill={color}
            />
          ))
      )}
      <Line pts={OSC_ORANGE} color="#ff4500" />
      <Line pts={OSC_GREEN} color="#00ff00" />
      <Line pts={OSC_BLUE} color="#0000ff" />
      <Line pts={OSC_YELLOW} color="#ffff00" />

      {/* pane 3 */}
      <path d="M5 556.5H1325M5 593.5H1325" stroke="#c4c4c4" strokeDasharray="4 3" />
      {CCI_SEGMENTS.map((s, i) => <Line key={i} pts={s.pts} color={s.color} w={s.w} />)}

      {/* pane 4 */}
      <path d="M5 646.5H1325" stroke="#8a8a8a" strokeDasharray="3 2" />
      {STEP_YELLOW.map((pts, i) => <Line key={i} pts={pts} color="#ffff00" w={1} />)}
      <Line pts={STEP_BLACK} color="#000" />
      <path d="M4 668l5 5H4z" fill="#7d7d7d" />

      {/* cursor day markers over everything */}
      {HEADS.map(([x]) => (
        <path key={x} d={`M${x + 0.5} 75V673`} stroke="#fff" strokeDasharray="5 3" />
      ))}
      <path d="M930 78l3-3 3 3z" fill="#fff" />
      <path d="M930 423l3-3 3 3z" fill="#fff" />

      {/* pane frames */}
      {[[74, 424], [426, 530], [532, 617], [619, 673]].map(([a, b]) => (
        <rect key={a} x="4.5" y={a + 0.5} width="1320" height={b - a - 1} fill="none" stroke={SLATE} />
      ))}

      {/* right scale */}
      {PRICE_LABELS.map(([v, y]) => (
        <g key={v}>
          <path d={`M1325 ${y - 3.5}h4`} stroke={SLATE} />
          <SvgLabel x="1330" y={y}>{v}</SvgLabel>
        </g>
      ))}
      <rect x="1326" y="100" width="33" height="11" fill={SLATE} />
      <SvgLabel x="1331" y="109" $fill="#e4e4e4">22875</SvgLabel>
      {PANE_LABELS.map(([t, x, y], i) => (
        <SvgLabel key={i} x={x} y={y}>{t}</SvgLabel>
      ))}

      {/* time scale */}
      {DATE_LABELS.map(([t, x]) => (
        <g key={t}>
          <path d={`M${x + 1.5} 673v4`} stroke={SLATE} />
          <SvgLabel x={x} y="685">{t}</SvgLabel>
        </g>
      ))}
      <rect x="893" y="675" width="80" height="14" fill="#fff" />
      <SvgLabel x="897" y="685" $fill="#8a8a8a">2018.03.14 16:00</SvgLabel>
      <rect x="1038" y="675" width="78" height="14" fill="#fff" />
      <SvgLabel x="1041" y="685" $fill="#8a8a8a">2018.03.16 16:00</SvgLabel>
    </ChartSvg>
  );
};

export default function App() {
  return (
    <Page>
      <GlobalStyle />
      <TitleBar>
        <Logo>X<b>M</b></Logo>
        <TitleText>9063893: XMUK-Demo 2 - Conto dimostrativo (demo) - [IT40Cash,H1]</TitleText>
        <WinButton>
          <svg width="12" height="12"><path d="M1 6h10" stroke="#fff" /></svg>
        </WinButton>
        <WinButton>
          <svg width="12" height="12"><path d="M1.5 3.5h7v7h-7zM3.5 3V1.5h7v7H9" fill="none" stroke="#fff" /></svg>
        </WinButton>
        <WinButton>
          <svg width="12" height="12"><path d="M1 1l10 10M11 1L1 11" stroke="#fff" /></svg>
        </WinButton>
      </TitleBar>

      <MenuBar>
        <MenuIconSlot><MenuChartIcon /></MenuIconSlot>
        {MENUS.map(([m, w]) => <MenuItem key={m} $w={w}>{m}</MenuItem>)}
        <MdiButtons>
          <MdiButton><svg width="10" height="10"><path d="M2 8h6" stroke="#555" strokeWidth="2" /></svg></MdiButton>
          <MdiButton><svg width="10" height="10"><path d="M0.5 4.5h6v4h-6zM3 4V1.5h6v4H7" fill="none" stroke="#555" /></svg></MdiButton>
          <MdiButton><svg width="10" height="10"><path d="M1 1l8 8M9 1L1 9" stroke="#555" strokeWidth="1.8" /></svg></MdiButton>
        </MdiButtons>
      </MenuBar>

      <ToolBar>
        {TOOLS.map(renderTool)}
        <Spacer />
        <Slot $w={28}><SearchIcon /></Slot>
        <Slot $w={32}><ChatIcon /></Slot>
      </ToolBar>

      <ChartArea>
        <Chart />
        <Dialog>
          <DialogHead>
            <span>?</span>
            <svg width="12" height="12"><path d="M1 1l10 10M11 1L1 11" stroke="#8a8a8a" /></svg>
          </DialogHead>
          <MessageRow>
            <MessageText>DMI oscillator state changed to</MessageText>
            <MessageArrows>
              <Chevron up color="#c4c4c4" />
              <Chevron color="#c4c4c4" />
            </MessageArrows>
          </MessageRow>
          <AlertList>
            <AlertRows>
              <AlertRow $shaded $size={11} $indent={-1}>05:29 DMI oscillator state c…</AlertRow>
              <AlertRow $indent={-5}>Cash Period 1440</AlertRow>
              <AlertRow $shaded>n Period 1440</AlertRow>
              <AlertRow $indent={-5}>Cash Period 1440</AlertRow>
            </AlertRows>
            <AlertScroll>
              <ScrollArrow><Chevron up color="#333" /></ScrollArrow>
              <ScrollThumb />
              <Spacer />
              <ScrollArrow><Chevron color="#333" /></ScrollArrow>
            </AlertScroll>
          </AlertList>
          <DialogButton />
        </Dialog>
      </ChartArea>

      <TabBar>
        {TABS.map(([t, w, active], i) => <Tab key={i} $w={w} $active={active}>{t}</Tab>)}
        <TabArrows>
          <svg width="6" height="8"><path d="M5 0v8L1 4z" fill="#9a9a9a" /></svg>
          <svg width="6" height="8"><path d="M1 0v8l4-4z" fill="#000" /></svg>
        </TabArrows>
      </TabBar>

      <StatusBar>
        <StatusCell $w={672} $pad={2}>Per aiuto, premi F1</StatusCell>
        <StatusCell $w={116}>Default</StatusCell>
        <StatusCell $w={102} />
        <StatusCell $w={72} />
        <StatusCell $w={70} />
        <StatusCell $w={68} />
        <StatusCell $w={71} />
        <StatusCell $w={66} />
        <StatusCell $w={129}>
          <ConnectionIcon />
          3504/3 kb
        </StatusCell>
      </StatusBar>
    </Page>
  );
}
